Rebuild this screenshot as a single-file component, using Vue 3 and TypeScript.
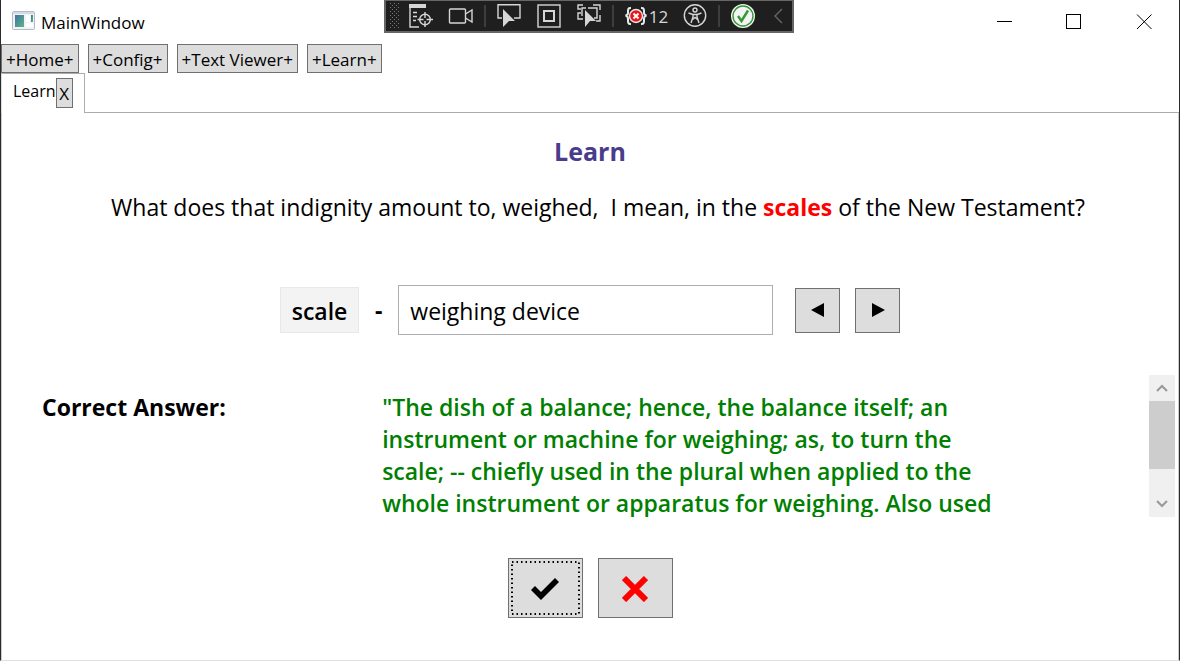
<script setup lang="ts">
import { ref } from 'vue'

const menu: string[] = ['+Home+', '+Config+', '+Text Viewer+', '+Learn+']
const answer = ref<string>('weighing device')
const definition: string[] = [
  '"The dish of a balance; hence, the balance itself; an',
  'instrument or machine for weighing; as, to turn the',
  'scale; -- chiefly used in the plural when applied to the',
  'whole instrument or apparatus for weighing. Also used',
]
</script>

<template>
  <div class="window">
    <header class="titlebar">
      <svg class="app-icon" viewBox="0 0 23 19" width="23" height="19" aria-hidden="true">
        <defs>
          <linearGradient id="pane" x1="0" y1="0" x2="1" y2="1">
            <stop offset="0" stop-color="#3f74a8" />
            <stop offset="1" stop-color="#5cb583" />
          </linearGradient>
        </defs>
        <rect x="0.5" y="0.5" width="22" height="18" rx="1" fill="#f0f2f6" stroke="#b4bac6" />
        <rect x="1" y="1" width="21" height="2" fill="#d5dbe5" />
        <rect x="3" y="4" width="9" height="12" fill="url(#pane)" />
        <rect x="14" y="4" width="4" height="7" fill="#fff" />
        <rect x="14" y="12" width="7" height="4" fill="#fff" />
        <rect x="19" y="4" width="2" height="7" fill="url(#pane)" />
      </svg>
      <span class="title">MainWindow</span>
      <div class="caption">
        <button type="button" aria-label="Minimize">
          <svg viewBox="0 0 16 16" width="16" height="16"><path d="M1 8.5H16" stroke="#000" /></svg>
        </button>
        <button type="button" aria-label="Maximize">
          <svg viewBox="0 0 16 16" width="16" height="16"><rect x="0.5" y="1.5" width="14" height="14" fill="none" stroke="#000" /></svg>
        </button>
        <button type="button" aria-label="Close">
          <svg viewBox="0 0 16 16" width="16" height="16"><path d="M1 1.5L15.500 16M15.500 1.5L1 16" stroke="#000" /></svg>
        </button>
      </div>
    </header>

    <div class="debugbar" role="toolbar" aria-label="Debug tools">
      <svg class="grip" viewBox="0 0 10 26" width="10" height="26" aria-hidden="true">
        <defs>
          <pattern id="dots" width="4" height="4" patternUnits="userSpaceOnUse">
            <rect width="1" height="1" fill="#777" />
            <rect x="2" y="2" width="1" height="1" fill="#777" />
          </pattern>
        </defs>
        <rect width="9" height="26" fill="url(#dots)" />
      </svg>
      <button type="button" aria-label="Live visual tree">
        <svg viewBox="0 0 26 26" width="26" height="26" fill="none" stroke="#d6d6d6" stroke-width="1.4">
          <rect x="1" y="1" width="17" height="4" fill="#d6d6d6" stroke="none" />
          <path d="M2 4V24H11M5 9.500H9M5 13.500H9M5 17.500H8" />
          <circle cx="17" cy="16.500" r="5.300" />
          <path d="M17 9V15M17 18V24M9.500 16.500H15.500M18.500 16.500H25" />
        </svg>
      </button>
      <button type="button" aria-label="Record">
        <svg viewBox="0 0 26 26" width="26" height="26" fill="none" stroke="#d6d6d6" stroke-width="1.400">
          <rect x="1.500" y="6" width="16" height="14" rx="1" />
          <path d="M17.500 11L24 7V19L17.500 15" />
        </svg>
      </button>
      <i class="sep"></i>
      <button type="button" aria-label="Select element">
        <svg viewBox="0 0 26 26" width="26" height="26" fill="none" stroke="#d6d6d6" stroke-width="1.400">
          <path d="M6 15H2V1.700H24V15H18" />
          <path d="M7 6L19 18H13L7 24Z" fill="#d6d6d6" stroke="none" />
        </svg>
      </button>
      <button type="button" aria-label="Display layout adorners">
        <svg viewBox="0 0 26 26" width="26" height="26" fill="none" stroke="#d6d6d6">
          <rect x="2" y="2" width="22" height="22" stroke-width="1.400" />
          <rect x="8" y="8" width="10" height="10" stroke-width="2" />
        </svg>
      </button>
      <button type="button" aria-label="Track focused element">
        <svg viewBox="0 0 26 26" width="26" height="26" fill="none" stroke="#d6d6d6" stroke-width="1.400">
          <path d="M7 2H2V6H5M5 10H2V16H7M10 5H6V13M12 5H21V15H18M17 2H24V7M24 12V18H20" />
          <path d="M9 7L20 18H14L9 24Z" fill="#d6d6d6" stroke="none" />
        </svg>
      </button>
      <i class="sep"></i>
      <button class="failures" type="button">
        <svg viewBox="0 0 24 26" width="24" height="26" fill="none" stroke="#e8e8e8" stroke-width="2">
          <path d="M7 5H6Q4 5 4 8V10Q4 12 1.500 12.500Q4 13 4 16V18Q4 21 6 21H7M17 5H18Q20 5 20 8V10Q20 12 22.500 12.500Q20 13 20 16V18Q20 21 18 21H17" />
          <circle cx="12" cy="13" r="6.500" fill="#f01414" stroke-width="1.400" />
          <path d="M9.500 10.500L14.500 15.500M14.500 10.500L9.500 15.500" stroke="#fff" stroke-width="2" />
        </svg>
        <span>12</span>
      </button>
      <button type="button" aria-label="Accessibility checker">
        <svg viewBox="0 0 26 26" width="26" height="26" fill="none" stroke="#d6d6d6" stroke-width="1.400">
          <circle cx="13" cy="12.500" r="10.700" />
          <circle cx="13" cy="7" r="2" />
          <path d="M6.500 10L11 11.500V14L9 20M19.500 10L15 11.500V14L17 20M11 11.500H15M10.500 16.500L13 14.500L15.500 16.500" />
        </svg>
      </button>
      <i class="sep"></i>
      <button type="button" aria-label="Hot Reload available">
        <svg viewBox="0 0 26 26" width="26" height="26" fill="none">
          <circle cx="13" cy="13" r="12" fill="#f4f4f4" />
          <circle cx="13" cy="13" r="10" stroke="#339933" stroke-width="1.400" />
          <path d="M8 13L11.500 18L18 7.500" stroke="#339933" stroke-width="2.400" />
        </svg>
      </button>
      <button class="collapse" type="button" aria-label="Collapse">
        <svg viewBox="0 0 26 26" width="26" height="26" fill="none"><path d="M17 6L10 13L17 20" stroke="#666" stroke-width="1.400" /></svg>
      </button>
    </div>

    <nav class="menu">
      <button v-for="item in menu" :key="item" class="btn" type="button">{{ item }}</button>
    </nav>

    <div class="tabs">
      <div class="tab">
        <span>Learn</span>
        <button class="btn close-tab" type="button" aria-label="Close Learn">X</button>
      </div>
      <div class="tab-rest"></div>
    </div>

    <main class="page">
      <h1>Learn</h1>
      <p class="question">What does that indignity amount to, weighed,&nbsp; I mean, in the <strong>scales</strong> of the New Testament?</p>

      <div class="entry">
        <label class="word" for="answer">scale</label>
        <span class="dash">-</span>
        <input id="answer" v-model="answer" type="text" />
        <div class="steps">
          <button class="btn" type="button" aria-label="Previous">
            <svg viewBox="0 0 14 14" width="14" height="14"><path d="M0 7L13 0V14Z" /></svg>
          </button>
          <button class="btn" type="button" aria-label="Next">
            <svg viewBox="0 0 14 14" width="14" height="14"><path d="M14 7L1 0V14Z" /></svg>
          </button>
        </div>
      </div>

      <section class="result">
        <h2>Correct Answer:</h2>
        <p class="definition">
          <span v-for="line in definition" :key="line">{{ line }}</span>
        </p>
        <div class="scrollbar">
          <button type="button" aria-label="Scroll up">
            <svg viewBox="0 0 12 8" width="12" height="8"><path d="M1 7L6 2L11 7" fill="none" stroke="#999" stroke-width="2" /></svg>
          </button>
          <div class="track"><div class="thumb"></div></div>
          <button type="button" aria-label="Scroll down">
            <svg viewBox="0 0 12 8" width="12" height="8"><path d="M1 1L6 6L11 1" fill="none" stroke="#999" stroke-width="2" /></svg>
          </button>
        </div>
      </section>

      <div class="verdict">
        <button class="btn" type="button" aria-label="Right">
          <svg viewBox="0 0 73 58" width="73" height="58">
            <rect x="3" y="3" width="67" height="52" fill="none" stroke="#000" stroke-width="2" stroke-dasharray="1.500 3" />
            <path d="M22 31L26 27L32 33L46 19L50 23L32 41Z" fill="#000" />
          </svg>
        </button>
        <button class="btn" type="button" aria-label="Wrong">
          <svg viewBox="0 0 26 28" width="26" height="28"><path d="M2 4L24 26M24 4L2 26" stroke="#f00" stroke-width="6" /></svg>
        </button>
      </div>
    </main>
  </div>
</template>

<style>
body {
  margin: 0;
  background: #fff;
}
</style>

<style scoped>
* {
  box-sizing: border-box;
}

.window {
  position: relative;
  display: flex;
  flex-direction: column;
  min-height: 100vh;
  border-left: 1px solid #2b2a2e;
  border-right: 1px solid #2b2a2e;
  border-bottom: 1px solid #e0e0e0;
  background: #fff;
  color: #000;
  font-family: "Open Sans", "Noto Sans", sans-serif;
  font-size: 17px;
}

button {
  display: flex;
  align-items: center;
  justify-content: center;
  margin: 0;
  padding: 0;
  border: 0;
  background: none;
  color: inherit;
  font: inherit;
}

svg {
  display: block;
  flex: none;
}

.btn {
  border: 1px solid #707070;
  background: #ddd;
}

.titlebar {
  display: flex;
  align-items: center;
  height: 44px;
  padding-left: 11px;
}

.app-icon {
  margin-bottom: 4px;
}

.title {
  flex: 1;
  margin-left: 6px;
}

.caption {
  display: flex;
  align-self: stretch;
}

.caption button {
  width: 70px;
  height: 42px;
}

.debugbar {
  position: absolute;
  top: 0;
  left: 50%;
  display: flex;
  align-items: center;
  width: 410px;
  height: 33px;
  margin-left: -206px;
  padding-left: 4px;
  border: 2px solid #666;
  border-top-width: 1px;
  background: #1f1f1f;
  color: #d6d6d6;
}

.debugbar button {
  width: 40px;
  height: 30px;
}

.grip {
  margin-right: 1px;
}

.sep {
  width: 2px;
  height: 22px;
  margin: 0 3px;
  background: #3d3d3d;
}

.debugbar .failures {
  gap: 1px;
  width: 58px;
}

.debugbar .collapse {
  margin-left: auto;
  width: 28px;
}

.menu {
  display: flex;
  gap: 9px;
}

.menu .btn {
  height: 29px;
  padding: 1px 4px 0;
}

.tabs {
  display: flex;
  height: 40px;
}

.tab {
  display: flex;
  align-items: flex-start;
  width: 84px;
  padding: 4px 11px 0;
  border: 1px solid #acacac;
  border-bottom: 0;
  border-left-color: #ddd;
}

.tab span {
  font-size: 16px;
  line-height: 26px;
}

.close-tab {
  width: 17px;
  height: 30px;
}

.tab-rest {
  flex: 1;
  border-bottom: 1px solid #acacac;
}

.page {
  display: flex;
  flex: 1;
  flex-direction: column;
  border: 1px solid #ccc;
  border-width: 0 1px;
  font-size: 23px;
  line-height: 32px;
}

h1 {
  margin: 22px 0 0;
  color: #483d8b;
  font-size: 25px;
  font-weight: 700;
  line-height: 32px;
  text-align: center;
}

.question {
  margin: 24px 0 0 16px;
  text-align: center;
}

.question strong {
  color: #f00;
}

.entry {
  display: flex;
  align-items: center;
  justify-content: center;
  margin-top: 62px;
}

.word {
  padding: 7px 11px 5px;
  border: 1px solid #e8e8e8;
  background: #f3f3f3;
  font-weight: 600;
}

.dash {
  width: 39px;
  font-weight: 700;
  text-align: center;
}

.entry input {
  width: 375px;
  height: 50px;
  padding: 2px 11px 0;
  border: 1px solid #abadb3;
  background: #fff;
  color: #000;
  font: inherit;
}

.steps {
  display: flex;
  gap: 15px;
  margin-left: 22px;
}

.steps .btn {
  width: 45px;
  height: 45px;
}

.result {
  display: flex;
  height: 142px;
  margin: 40px 3px 0 0;
  overflow: hidden;
}

h2 {
  width: 29%;
  flex: none;
  margin: 16px 0 0 40px;
  font-size: 23px;
  font-weight: 700;
  line-height: 32px;
}

.definition {
  flex: 1;
  margin: 16px 0 0;
  color: #008000;
  font-weight: 600;
}

.definition span {
  display: block;
}

.scrollbar {
  display: flex;
  flex-direction: column;
  width: 26px;
  background: #f0f0f0;
}

.scrollbar button {
  height: 26px;
}

.track {
  flex: 1;
}

.thumb {
  height: 75%;
  background: #cdcdcd;
}

.verdict {
  display: flex;
  justify-content: center;
  gap: 15px;
  margin: 41px 0;
}

.verdict .btn {
  width: 75px;
  height: 60px;
}
</style>
